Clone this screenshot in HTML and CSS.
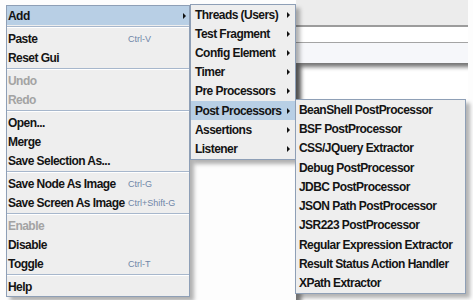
FILE: index.html
```html
<!DOCTYPE html>
<html lang="en">
<head>
    <meta charset="UTF-8">
    <title>JMeter - Add menu</title>
    <link rel="stylesheet" href="styles.css">
</head>
<body>
    <div class="app">
        <div class="backdrop">
            <div class="toolbar"></div>
            <div class="field"></div>
            <div class="field-gap"></div>
            <div class="panel"></div>
        </div>

        <!-- main popup -->
        <ul class="menu main-menu">
            <li class="item active"><span class="label">Add</span><span class="arrow"></span></li>
            <li class="sep"></li>
            <li class="item"><span class="label">Paste</span><span class="key">Ctrl-V</span></li>
            <li class="item"><span class="label">Reset Gui</span></li>
            <li class="sep"></li>
            <li class="item disabled"><span class="label">Undo</span></li>
            <li class="item disabled"><span class="label">Redo</span></li>
            <li class="sep"></li>
            <li class="item"><span class="label">Open...</span></li>
            <li class="item"><span class="label">Merge</span></li>
            <li class="item"><span class="label">Save Selection As...</span></li>
            <li class="sep"></li>
            <li class="item"><span class="label">Save Node As Image</span><span class="key">Ctrl-G</span></li>
            <li class="item"><span class="label">Save Screen As Image</span><span class="key">Ctrl+Shift-G</span></li>
            <li class="sep"></li>
            <li class="item disabled"><span class="label">Enable</span></li>
            <li class="item"><span class="label">Disable</span></li>
            <li class="item"><span class="label">Toggle</span><span class="key">Ctrl-T</span></li>
            <li class="sep"></li>
            <li class="item"><span class="label">Help</span></li>
        </ul>

        <!-- Add submenu -->
        <ul class="menu add-menu">
            <li class="item"><span class="label">Threads (Users)</span><span class="arrow"></span></li>
            <li class="item"><span class="label">Test Fragment</span><span class="arrow"></span></li>
            <li class="item"><span class="label">Config Element</span><span class="arrow"></span></li>
            <li class="item"><span class="label">Timer</span><span class="arrow"></span></li>
            <li class="item"><span class="label">Pre Processors</span><span class="arrow"></span></li>
            <li class="item active"><span class="label">Post Processors</span><span class="arrow"></span></li>
            <li class="item"><span class="label">Assertions</span><span class="arrow"></span></li>
            <li class="item"><span class="label">Listener</span><span class="arrow"></span></li>
        </ul>

        <!-- Post Processors submenu -->
        <ul class="menu post-menu">
            <li class="item"><span class="label">BeanShell PostProcessor</span></li>
            <li class="item"><span class="label">BSF PostProcessor</span></li>
            <li class="item"><span class="label">CSS/JQuery Extractor</span></li>
            <li class="item"><span class="label">Debug PostProcessor</span></li>
            <li class="item"><span class="label">JDBC PostProcessor</span></li>
            <li class="item"><span class="label">JSON Path PostProcessor</span></li>
            <li class="item"><span class="label">JSR223 PostProcessor</span></li>
            <li class="item"><span class="label">Regular Expression Extractor</span></li>
            <li class="item"><span class="label">Result Status Action Handler</span></li>
            <li class="item"><span class="label">XPath Extractor</span></li>
        </ul>
    </div>
</body>
</html>
```

FILE: styles.css
```css
body {
    margin: 0;
    background-color: #fdfdfd;
    font-family: "Liberation Sans", Arial, sans-serif;
}
.app {
    position: relative;
    width: 473px;
    height: 300px;
    overflow: hidden;
}

/* window content behind the popups */
.backdrop {
    margin-left: 296px;
    width: 172px;
    height: 300px;
    display: flex;
    flex-direction: column;
}
.toolbar {
    height: 25px;
    background-color: #ececec;
    border-bottom: 2px solid #9c9c9c;
}
.field {
    height: 15px;
    background: white;
    border-bottom: 1px solid #a4a4a4;
}
.field-gap {
    height: 20px;
    background-color: #f6f7fa;
}
.panel {
    flex: 1;
    background: white;
    box-shadow: inset 6px 5px 4px -1px rgba(0,0,0,0.55);
}

/* popup menus */
.menu {
    position: absolute;
    list-style: none;
    margin: 0;
    padding: 0;
    background-color: #eeeeee;
    border: 1px solid #8e9fb6;
    box-shadow: 4px 4px 4px rgba(0,0,0,0.3);
}
.item {
    display: flex;
    align-items: center;
    height: 19px;
    font-size: 12px;
    font-weight: bold;
    letter-spacing: -0.55px;
    color: #141414;
    white-space: nowrap;
}
.item.active {
    background-color: #b8cfe5;
}
.item.disabled {
    color: #a3a3a3;
}
.sep {
    height: 1px;
    margin: 1px 0 2px;
    background-color: #a7b7cc;
    box-shadow: 0 1px 0 white;
}
.key {
    font-size: 9px;
    font-weight: normal;
    letter-spacing: 0;
    color: #6f86a8;
}
.arrow {
    margin-left: auto;
    width: 0;
    height: 0;
    border-top: 3px solid transparent;
    border-bottom: 3px solid transparent;
    border-left: 3px solid #111;
}

.main-menu {
    left: 6px;
    top: 5px;
    width: 182px;
}
.main-menu .item {
    padding: 0 3px 0 1px;
}
.main-menu .label {
    width: 120px;
}

.add-menu {
    left: 190px;
    top: 4px;
    width: 104px;
    z-index: 1;
}
.add-menu .item {
    height: 19.2px;
    padding: 0 5px 0 4px;
}

.post-menu {
    left: 295px;
    top: 99px;
    width: 169px;
    z-index: 2;
}
.post-menu .item {
    height: 19.3px;
    padding: 0 3px;
}
```
